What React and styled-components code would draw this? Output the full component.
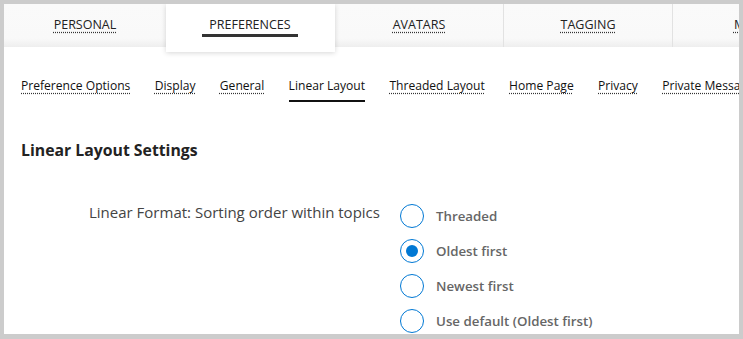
import React from "react";
import styled, { createGlobalStyle } from "styled-components";

const GlobalStyle = createGlobalStyle`
  html, body {
    margin: 0;
    padding: 0;
    background: #cccccc;
    font-family: "Open Sans", "Noto Sans", sans-serif;
  }
`;

const tabs = ["Personal", "Preferences", "Avatars", "Tagging", "Mobile"];
const subTabs = [
  "Preference Options",
  "Display",
  "General",
  "Linear Layout",
  "Threaded Layout",
  "Home Page",
  "Privacy",
  "Private Messages",
];
const options = ["Threaded", "Oldest first", "Newest first", "Use default (Oldest first)"];

export default function App() {
  return (
    <>
      <GlobalStyle />
      <FrameUI>
        <PanelUI>
          <TabBarUI>
            {tabs.map((t) => (
              <TabUI key={t} active={t === "Preferences"}>
                <TabTextUI active={t === "Preferences"}>{t}</TabTextUI>
              </TabUI>
            ))}
          </TabBarUI>

          <SubNavUI>
            {subTabs.map((t) => (
              <SubLinkUI key={t} active={t === "Linear Layout"}>
                {t}
              </SubLinkUI>
            ))}
          </SubNavUI>

          <HeadingUI>Linear Layout Settings</HeadingUI>

          <FieldUI>
            <LabelUI>Linear Format: Sorting order within topics</LabelUI>
            <OptionsUI>
              {options.map((o) => (
                <OptionUI key={o}>
                  <RadioUI checked={o === "Oldest first"} />
                  <OptionTextUI>{o}</OptionTextUI>
                </OptionUI>
              ))}
            </OptionsUI>
          </FieldUI>
        </PanelUI>
      </FrameUI>
    </>
  );
}

const FrameUI = styled.div`
  width: 743px;
  height: 339px;
  padding: 4px 4px 5px 4px;
  box-sizing: border-box;
  overflow: hidden;
`;

const PanelUI = styled.div`
  background: #fff;
  height: 100%;
  overflow: hidden;
`;

const TabBarUI = styled.div`
  display: flex;
  align-items: flex-start;
  height: 43px;
  background: linear-gradient(to bottom, #fafafa 0%, #f9f9f9 80%, #eeeeee 100%);
  white-space: nowrap;
`;

const TabUI = styled.div`
  flex: 0 0 auto;
  width: 169px;
  box-sizing: border-box;
  display: flex;
  justify-content: center;
  padding-top: 12px;
  border-right: 1px solid ${(p) => (p.active ? "transparent" : "#e2e2e2")};
  background: ${(p) => (p.active ? "#fff" : "transparent")};
  height: ${(p) => (p.active ? "48px" : "43px")};
  position: relative;
  z-index: ${(p) => (p.active ? 1 : 0)};
  box-shadow: ${(p) => (p.active ? "0 1px 5px rgba(0,0,0,0.16)" : "none")};
  &:first-child {
    width: 162px;
    border-right: none;
  }
`;

const TabTextUI = styled.a`
  display: inline-block;
  height: 17px;
  line-height: 17px;
  font-size: 12.5px;
  text-transform: uppercase;
  color: #222;
  text-decoration: ${(p) => (p.active ? "none" : "underline dotted #333")};
  text-underline-offset: 3px;
  padding: 0 7px 1px;
  border-bottom: 3px solid ${(p) => (p.active ? "#333" : "transparent")};
`;

const SubNavUI = styled.div`
  display: flex;
  gap: 24.3px;
  padding: 30px 0 0 17px;
  white-space: nowrap;
`;

const SubLinkUI = styled.a`
  font-size: 12.1px;
  color: #111;
  padding-bottom: 6px;
  text-decoration: ${(p) => (p.active ? "none" : "underline dotted #333")};
  text-underline-offset: 3px;
  border-bottom: 2px solid ${(p) => (p.active ? "#111" : "transparent")};
`;

const HeadingUI = styled.h2`
  margin: 37px 0 0 17px;
  font-size: 15.8px;
  font-weight: 700;
  color: #222;
`;

const FieldUI = styled.div`
  display: flex;
  margin-top: 41px;
  padding-left: 85px;
`;

const LabelUI = styled.div`
  font-size: 15px;
  color: #444;
  width: 311px;
  line-height: 20px;
`;

const OptionsUI = styled.div`
  display: flex;
  flex-direction: column;
  gap: 11px;
  margin-top: 2px;
`;

const OptionUI = styled.label`
  display: flex;
  align-items: center;
  gap: 12px;
`;

const RadioUI = styled.span`
  width: 24px;
  height: 24px;
  border-radius: 50%;
  border: 1.5px solid #0078d4;
  box-sizing: border-box;
  display: flex;
  justify-content: center;
  align-items: center;
  &::after {
    content: "";
    width: 12px;
    height: 12px;
    border-radius: 50%;
    background: #0078d4;
    display: ${(p) => (p.checked ? "block" : "none")};
  }
`;

const OptionTextUI = styled.span`
  font-size: 13.3px;
  font-weight: 600;
  color: #666;
`;
